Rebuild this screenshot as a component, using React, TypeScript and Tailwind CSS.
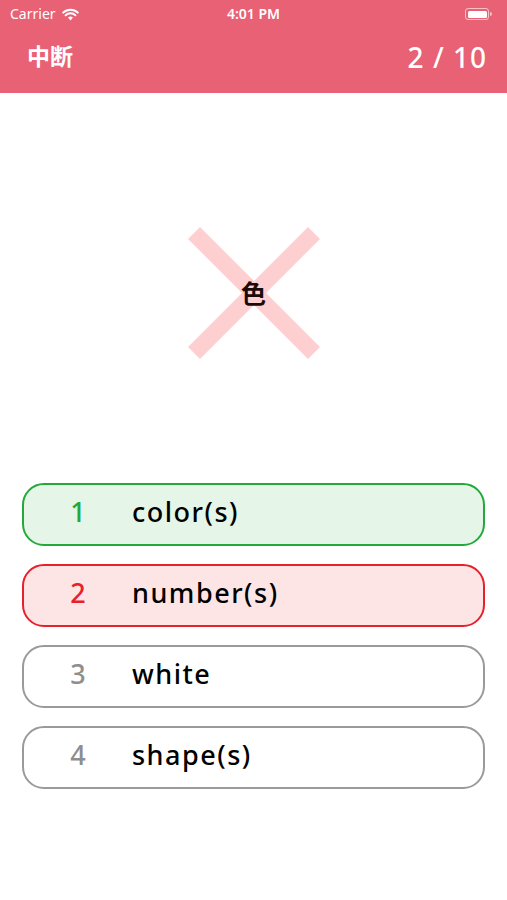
import React from "react";

const options = [
  { n: "1", label: "color(s)", box: "border-[#25a83a] bg-[#e5f5e8]", num: "text-[#25a83a]" },
  { n: "2", label: "number(s)", box: "border-[#e8202a] bg-[#fde5e6]", num: "text-[#e8202a]" },
  { n: "3", label: "white", box: "border-[#9a9a9a] bg-white", num: "text-[#8e8e8e]" },
  { n: "4", label: "shape(s)", box: "border-[#9a9a9a] bg-white", num: "text-[#8e8e8e]" },
];

export default function App() {
  return (
    <div
      className="w-[507px] h-[900px] bg-white flex flex-col"
      style={{ fontFamily: '"Noto Sans", "Noto Sans CJK JP", sans-serif' }}
    >
      <div className="bg-[#e86174] h-[93px] flex flex-col text-white">
        <div className="h-[28px] flex items-center justify-between px-[10px] relative">
          <div className="flex items-center gap-[6px] text-[14px] leading-none">
            <span>Carrier</span>
            <svg width="17" height="13" viewBox="0 0 17 13">
              <path d="M8.5 12.5 L6 9.6 A3.6 3.6 0 0 1 11 9.6 Z" fill="white" />
              <path d="M3.6 7.3 A7 7 0 0 1 13.4 7.3" stroke="white" strokeWidth="2" fill="none" strokeLinecap="round" />
              <path d="M1.2 4.6 A10.5 10.5 0 0 1 15.8 4.6" stroke="white" strokeWidth="2" fill="none" strokeLinecap="round" />
            </svg>
          </div>
          <span className="absolute left-1/2 -translate-x-1/2 text-[14px] font-semibold leading-none">4:01 PM</span>
          <div className="flex items-center mr-[5px]">
            <div className="w-[24px] h-[12px] rounded-[3px] border border-white/60 p-[1.5px]">
              <div className="w-full h-full bg-white rounded-[1.5px]" />
            </div>
            <div className="w-[2px] h-[4px] bg-white/60 rounded-r-sm ml-[1px]" />
          </div>
        </div>
        <div className="flex-1 flex items-center justify-between pl-[27px] pr-[20px] pb-[8px]">
          <span className="text-[23px] font-bold leading-none">中断</span>
          <span className="text-[28px] font-medium leading-none tracking-[1px]">2 / 10</span>
        </div>
      </div>

      <div className="h-[390px] flex items-center justify-center">
        <div className="relative w-[132px] h-[132px] flex items-center justify-center mt-[9px]">
          <svg className="absolute inset-0" width="132" height="132" viewBox="0 0 132 132">
            <line x1="6" y1="6" x2="126" y2="126" stroke="#fecfd0" strokeWidth="17" />
            <line x1="126" y1="6" x2="6" y2="126" stroke="#fecfd0" strokeWidth="17" />
          </svg>
          <span className="relative text-[25px] font-bold text-[#1a0a0a] leading-none" style={{ fontFamily: '"Noto Sans CJK JP", sans-serif' }}>色</span>
        </div>
      </div>

      <div className="flex flex-col gap-[18px] px-[22px]">
        {options.map((o) => (
          <div
            key={o.n}
            className={`h-[63px] rounded-[22px] border-2 flex items-center pb-[6px] ${o.box}`}
          >
            <span className={`w-[108px] text-center text-[27px] font-medium leading-none ${o.num}`}>{o.n}</span>
            <span className="text-[27px] font-medium tracking-[1.5px] text-black leading-none">{o.label}</span>
          </div>
        ))}
      </div>
    </div>
  );
}
